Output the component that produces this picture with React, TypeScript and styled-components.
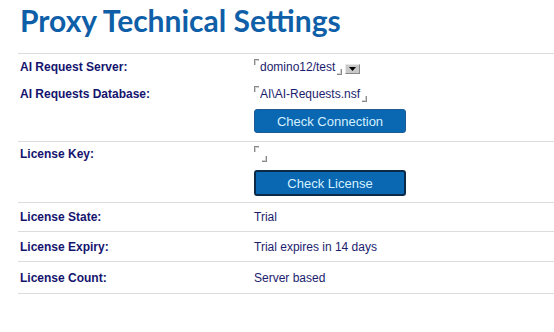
import styled, { createGlobalStyle } from "styled-components";

const GlobalStyle = createGlobalStyle`
  body {
    margin: 0;
    background: #ffffff;
    font-family: "Liberation Sans", Arial, sans-serif;
  }
`;

interface InfoRow {
  label: string;
  value: string;
  height: number;
}

const infoRows: InfoRow[] = [
  { label: "License State:", value: "Trial", height: 28 },
  { label: "License Expiry:", value: "Trial expires in 14 days", height: 29 },
  { label: "License Count:", value: "Server based", height: 31 },
];

const Field = ({ value }: { value: string }) => (
  <FieldWrap>
    <MarkStart />
    <FieldText>{value}</FieldText>
    <MarkEnd />
  </FieldWrap>
);

const App = () => {
  return (
    <Page>
      <GlobalStyle />
      <Title>Proxy Technical Settings</Title>
      <Form>
        <Section>
          <Line $height={25}>
            <Label>AI Request Server:</Label>
            <Value>
              <Field value="domino12/test" />
              <DropButton>
                <svg width="7" height="4" viewBox="0 0 7 4">
                  <path d="M0 0h7L3.5 4z" fill="#000" />
                </svg>
              </DropButton>
            </Value>
          </Line>
          <Line $height={29}>
            <Label>AI Requests Database:</Label>
            <Value>
              <Field value="AI\AI-Requests.nsf" />
            </Value>
          </Line>
          <ButtonLine $top={1} $bottom={8}>
            <Button>Check Connection</Button>
          </ButtonLine>
        </Section>
        <Section>
          <Line $height={24}>
            <Label>License Key:</Label>
            <Value>
              <Field value="" />
            </Value>
          </Line>
          <ButtonLine $top={4} $bottom={6}>
            <Button $focused>Check License</Button>
          </ButtonLine>
        </Section>
        {infoRows.map((row) => (
          <Section key={row.label}>
            <Line $height={row.height}>
              <Label>{row.label}</Label>
              <Value>{row.value}</Value>
            </Line>
          </Section>
        ))}
      </Form>
    </Page>
  );
};

export default App;

const Page = styled.div`
  width: 554px;
  height: 332px;
  overflow: hidden;
  background: #fff;
`;

const Title = styled.h1`
  margin: 0;
  padding: 0 0 0 20px;
  height: 53px;
  box-sizing: border-box;
  font-family: Lato, "Open Sans", sans-serif;
  font-weight: 700;
  font-size: 30px;
  line-height: 41px;
  letter-spacing: 0;
  color: #0f5fa8;
`;

const Form = styled.div`
  margin-left: 18px;
  border-top: 1px solid #dcdcdc;
`;

const Section = styled.div`
  border-bottom: 1px solid #dcdcdc;
`;

const Line = styled.div<{ $height: number }>`
  display: grid;
  grid-template-columns: 236px 1fr;
  align-items: center;
  height: ${(p) => p.$height}px;
`;

const Label = styled.div`
  padding-left: 2px;
  font-size: 12px;
  font-weight: 700;
  color: #14146e;
`;

const Value = styled.div`
  display: flex;
  align-items: center;
  font-size: 12px;
  color: #1c1c6e;
`;

const FieldWrap = styled.span`
  display: inline-flex;
  align-items: flex-start;
  height: 16px;
`;

const FieldText = styled.span`
  align-self: center;
  padding: 0 1px;
`;

const MarkStart = styled.span`
  width: 4px;
  height: 5px;
  border-top: 1px solid #8a8a8a;
  border-left: 1px solid #8a8a8a;
  box-shadow: inset 1px 1px 0 #d0d0d0;
`;

const MarkEnd = styled.span`
  align-self: flex-end;
  width: 4px;
  height: 5px;
  margin-left: 1px;
  border-bottom: 1px solid #8a8a8a;
  border-right: 1px solid #8a8a8a;
  box-shadow: inset -1px -1px 0 #d0d0d0;
`;

const DropButton = styled.span`
  display: inline-flex;
  align-items: center;
  justify-content: center;
  width: 13px;
  height: 8px;
  margin-left: 3px;
  margin-top: 5px;
  background: #c8c8c8;
  border: 1px solid #e8e8e8;
  border-right-color: #888;
  border-bottom-color: #888;
`;

const ButtonLine = styled.div<{ $top: number; $bottom: number }>`
  padding: ${(p) => p.$top}px 0 ${(p) => p.$bottom}px 236px;
`;

const Button = styled.button<{ $focused?: boolean }>`
  display: block;
  width: 152px;
  height: ${(p) => (p.$focused ? 26 : 24)}px;
  padding: 1px 0 0;
  font-family: "Liberation Sans", Arial, sans-serif;
  font-size: 13px;
  color: #d4f1ff;
  background: #0a67b2;
  border: ${(p) => (p.$focused ? "2px solid #0b2a48" : "1px solid #1d5c94")};
  border-radius: 3px;
  cursor: pointer;
`;
